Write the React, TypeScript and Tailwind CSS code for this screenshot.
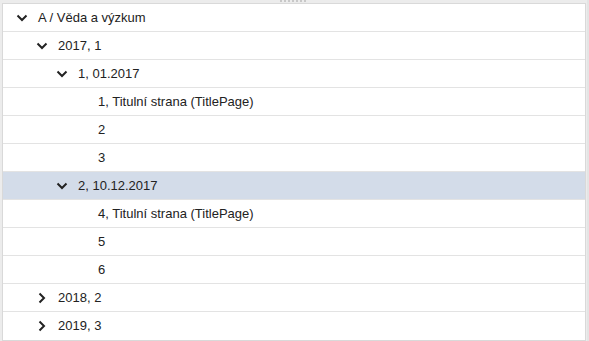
import React from "react";

type Row = { label: string; level: number; state: "open" | "closed" | "leaf"; selected?: boolean };

const rows: Row[] = [
  { label: "A / Věda a výzkum", level: 0, state: "open" },
  { label: "2017, 1", level: 1, state: "open" },
  { label: "1, 01.2017", level: 2, state: "open" },
  { label: "1, Titulní strana (TitlePage)", level: 3, state: "leaf" },
  { label: "2", level: 3, state: "leaf" },
  { label: "3", level: 3, state: "leaf" },
  { label: "2, 10.12.2017", level: 2, state: "open", selected: true },
  { label: "4, Titulní strana (TitlePage)", level: 3, state: "leaf" },
  { label: "5", level: 3, state: "leaf" },
  { label: "6", level: 3, state: "leaf" },
  { label: "2018, 2", level: 1, state: "closed" },
  { label: "2019, 3", level: 1, state: "closed" },
];

const Chevron = ({ open }: { open: boolean }) => (
  <svg width="12" height="12" viewBox="0 0 12 12" className={open ? "" : "-rotate-90"}>
    <path d="M1.5 3.5 L6 8 L10.5 3.5" fill="none" stroke="#222" strokeWidth="2" />
  </svg>
);

export default function App() {
  return (
    <div className="w-[589px] h-[341px] bg-[#ececec] relative overflow-hidden" style={{ fontFamily: '"Liberation Sans", Arial, sans-serif' }}>
      <div className="absolute top-0 left-[280px] flex gap-[2px]">
        {Array.from({ length: 7 }).map((_, i) => (
          <div key={i} className="w-[2px] h-[2px] bg-[#c8c8c8]" />
        ))}
      </div>
      <div className="absolute right-0 top-0 w-[2px] h-[341px] bg-[#e4e4e4]" />
      <div className="pt-[3px] pl-[2px] pr-[3px]">
        <div className="bg-white border border-[#d9d9d9] w-[584px]">
          {rows.map((r, i) => (
            <div
              key={i}
              className={`h-[28px] flex items-center border-[#e3e3e3] ${i < rows.length - 1 ? "border-b" : ""} ${r.selected ? "bg-[#d3dce9]" : ""}`}
              style={{ paddingLeft: 13 + r.level * 20 }}
            >
              <div className="w-[12px] h-[12px] flex items-center justify-center mr-[10px]">
                {r.state !== "leaf" && <Chevron open={r.state === "open"} />}
              </div>
              <span className="text-[13px] text-[#222]">{r.label}</span>
            </div>
          ))}
        </div>
      </div>
    </div>
  );
}
